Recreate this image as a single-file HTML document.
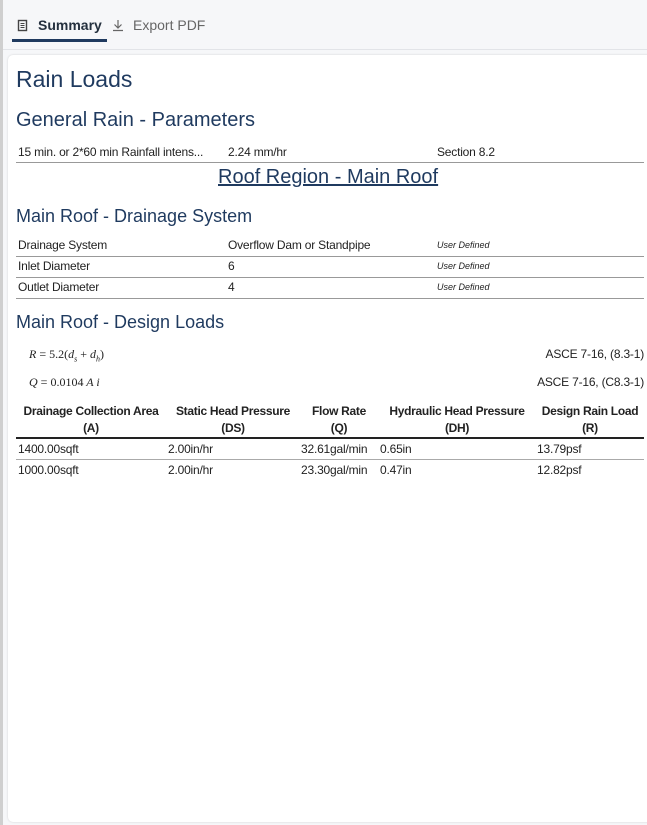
<!DOCTYPE html>
<html><head><meta charset="utf-8"><style>
body{margin:0;width:647px;height:825px;background:#f6f7f9;position:relative;overflow:hidden;font-family:"Liberation Sans",sans-serif;color:#222;}
.lb{position:absolute;left:0;top:0;width:3px;height:825px;background:#cfcfcf;}
.tabline{position:absolute;left:3px;top:49px;width:644px;height:1px;background:#e2e4e8;}
.card{position:absolute;left:8px;top:55px;width:645px;height:767px;background:#fff;border-radius:5px;box-shadow:0 0 2px rgba(0,0,0,.15);}
.a{position:absolute;white-space:nowrap;}
.h{color:#1f3a5f;}
.hr{position:absolute;left:16px;width:628px;height:1px;background:#999;}
.s{font-size:12px;letter-spacing:-0.2px;}
.i{font-size:9px;font-style:italic;}
.b{font-size:12px;font-weight:bold;text-align:center;letter-spacing:-0.3px;line-height:17px;}
.m{font-family:"Liberation Serif",serif;font-style:italic;font-size:12px;}
</style></head><body>
<div class="lb"></div>
<div class="tabline"></div>
<svg class="a" style="left:17px;top:19px" width="12" height="13" viewBox="0 0 12 13"><rect x="1.5" y="1.5" width="8" height="10" fill="none" stroke="#444" stroke-width="1.4"/><path d="M3.5 4.5h4M3.5 6.5h4M3.5 8.5h4" stroke="#444" stroke-width="1"/></svg>
<div class="a" style="left:38px;top:17px;font-size:14px;font-weight:bold;color:#24303e">Summary</div>
<div class="a" style="left:12px;top:39px;width:95px;height:3px;background:#1f3a5f"></div>
<svg class="a" style="left:112px;top:19px" width="12" height="13" viewBox="0 0 12 13"><path d="M6 1v8M2.5 5.5L6 9l3.5-3.5M1 11.5h10" fill="none" stroke="#666" stroke-width="1.2"/></svg>
<div class="a" style="left:133px;top:17px;font-size:14px;color:#666">Export PDF</div>
<div class="card"></div>
<div class="a h" style="left:16px;top:66px;font-size:23px">Rain Loads</div>
<div class="a h" style="left:16px;top:109px;font-size:20px">General Rain - Parameters</div>
<div class="a s" style="left:18px;top:145px">15 min. or 2*60 min Rainfall intens...</div>
<div class="a s" style="left:228px;top:145px">2.24 mm/hr</div>
<div class="a s" style="left:437px;top:145px">Section 8.2</div>
<div class="hr" style="top:162px"></div>
<div class="a h" style="left:218px;top:166px;font-size:20px;text-decoration:underline">Roof Region - Main Roof</div>
<div class="a h" style="left:16px;top:206px;font-size:18px">Main Roof - Drainage System</div>
<div class="a s" style="left:18px;top:238px">Drainage System</div>
<div class="a s" style="left:228px;top:238px">Overflow Dam or Standpipe</div>
<div class="a i" style="left:437px;top:240px">User Defined</div>
<div class="hr" style="top:256px"></div>
<div class="a s" style="left:18px;top:259px">Inlet Diameter</div>
<div class="a s" style="left:228px;top:259px">6</div>
<div class="a i" style="left:437px;top:261px">User Defined</div>
<div class="hr" style="top:277px"></div>
<div class="a s" style="left:18px;top:280px">Outlet Diameter</div>
<div class="a s" style="left:228px;top:280px">4</div>
<div class="a i" style="left:437px;top:282px">User Defined</div>
<div class="hr" style="top:298px"></div>
<div class="a h" style="left:16px;top:312px;font-size:18px">Main Roof - Design Loads</div>
<div class="a m" style="left:29px;top:347px"><i>R</i> <span style="font-style:normal">= 5.2(</span>d<sub style="font-size:8px">s</sub> <span style="font-style:normal">+</span> d<sub style="font-size:8px">h</sub><span style="font-style:normal">)</span></div>
<div class="a s" style="right:3px;top:347px">ASCE 7-16, (8.3-1)</div>
<div class="a m" style="left:29px;top:375px">Q <span style="font-style:normal">= 0.0104</span> A i</div>
<div class="a s" style="right:3px;top:375px">ASCE 7-16, (C8.3-1)</div>
<div class="a b" style="left:16px;top:403px;width:150px">Drainage Collection Area<br>(A)</div>
<div class="a b" style="left:168px;top:403px;width:130px">Static Head Pressure<br>(DS)</div>
<div class="a b" style="left:300px;top:403px;width:78px">Flow Rate<br>(Q)</div>
<div class="a b" style="left:382px;top:403px;width:150px">Hydraulic Head Pressure<br>(DH)</div>
<div class="a b" style="left:536px;top:403px;width:108px">Design Rain Load<br>(R)</div>
<div class="a" style="left:16px;top:437px;width:628px;height:2px;background:#222"></div>
<div class="a s" style="left:18px;top:442px">1400.00sqft</div>
<div class="a s" style="left:168px;top:442px">2.00in/hr</div>
<div class="a s" style="left:301px;top:442px">32.61gal/min</div>
<div class="a s" style="left:380px;top:442px">0.65in</div>
<div class="a s" style="left:537px;top:442px">13.79psf</div>
<div class="hr" style="top:459px;background:#aaa"></div>
<div class="a s" style="left:18px;top:463px">1000.00sqft</div>
<div class="a s" style="left:168px;top:463px">2.00in/hr</div>
<div class="a s" style="left:301px;top:463px">23.30gal/min</div>
<div class="a s" style="left:380px;top:463px">0.47in</div>
<div class="a s" style="left:537px;top:463px">12.82psf</div>
</body></html>
